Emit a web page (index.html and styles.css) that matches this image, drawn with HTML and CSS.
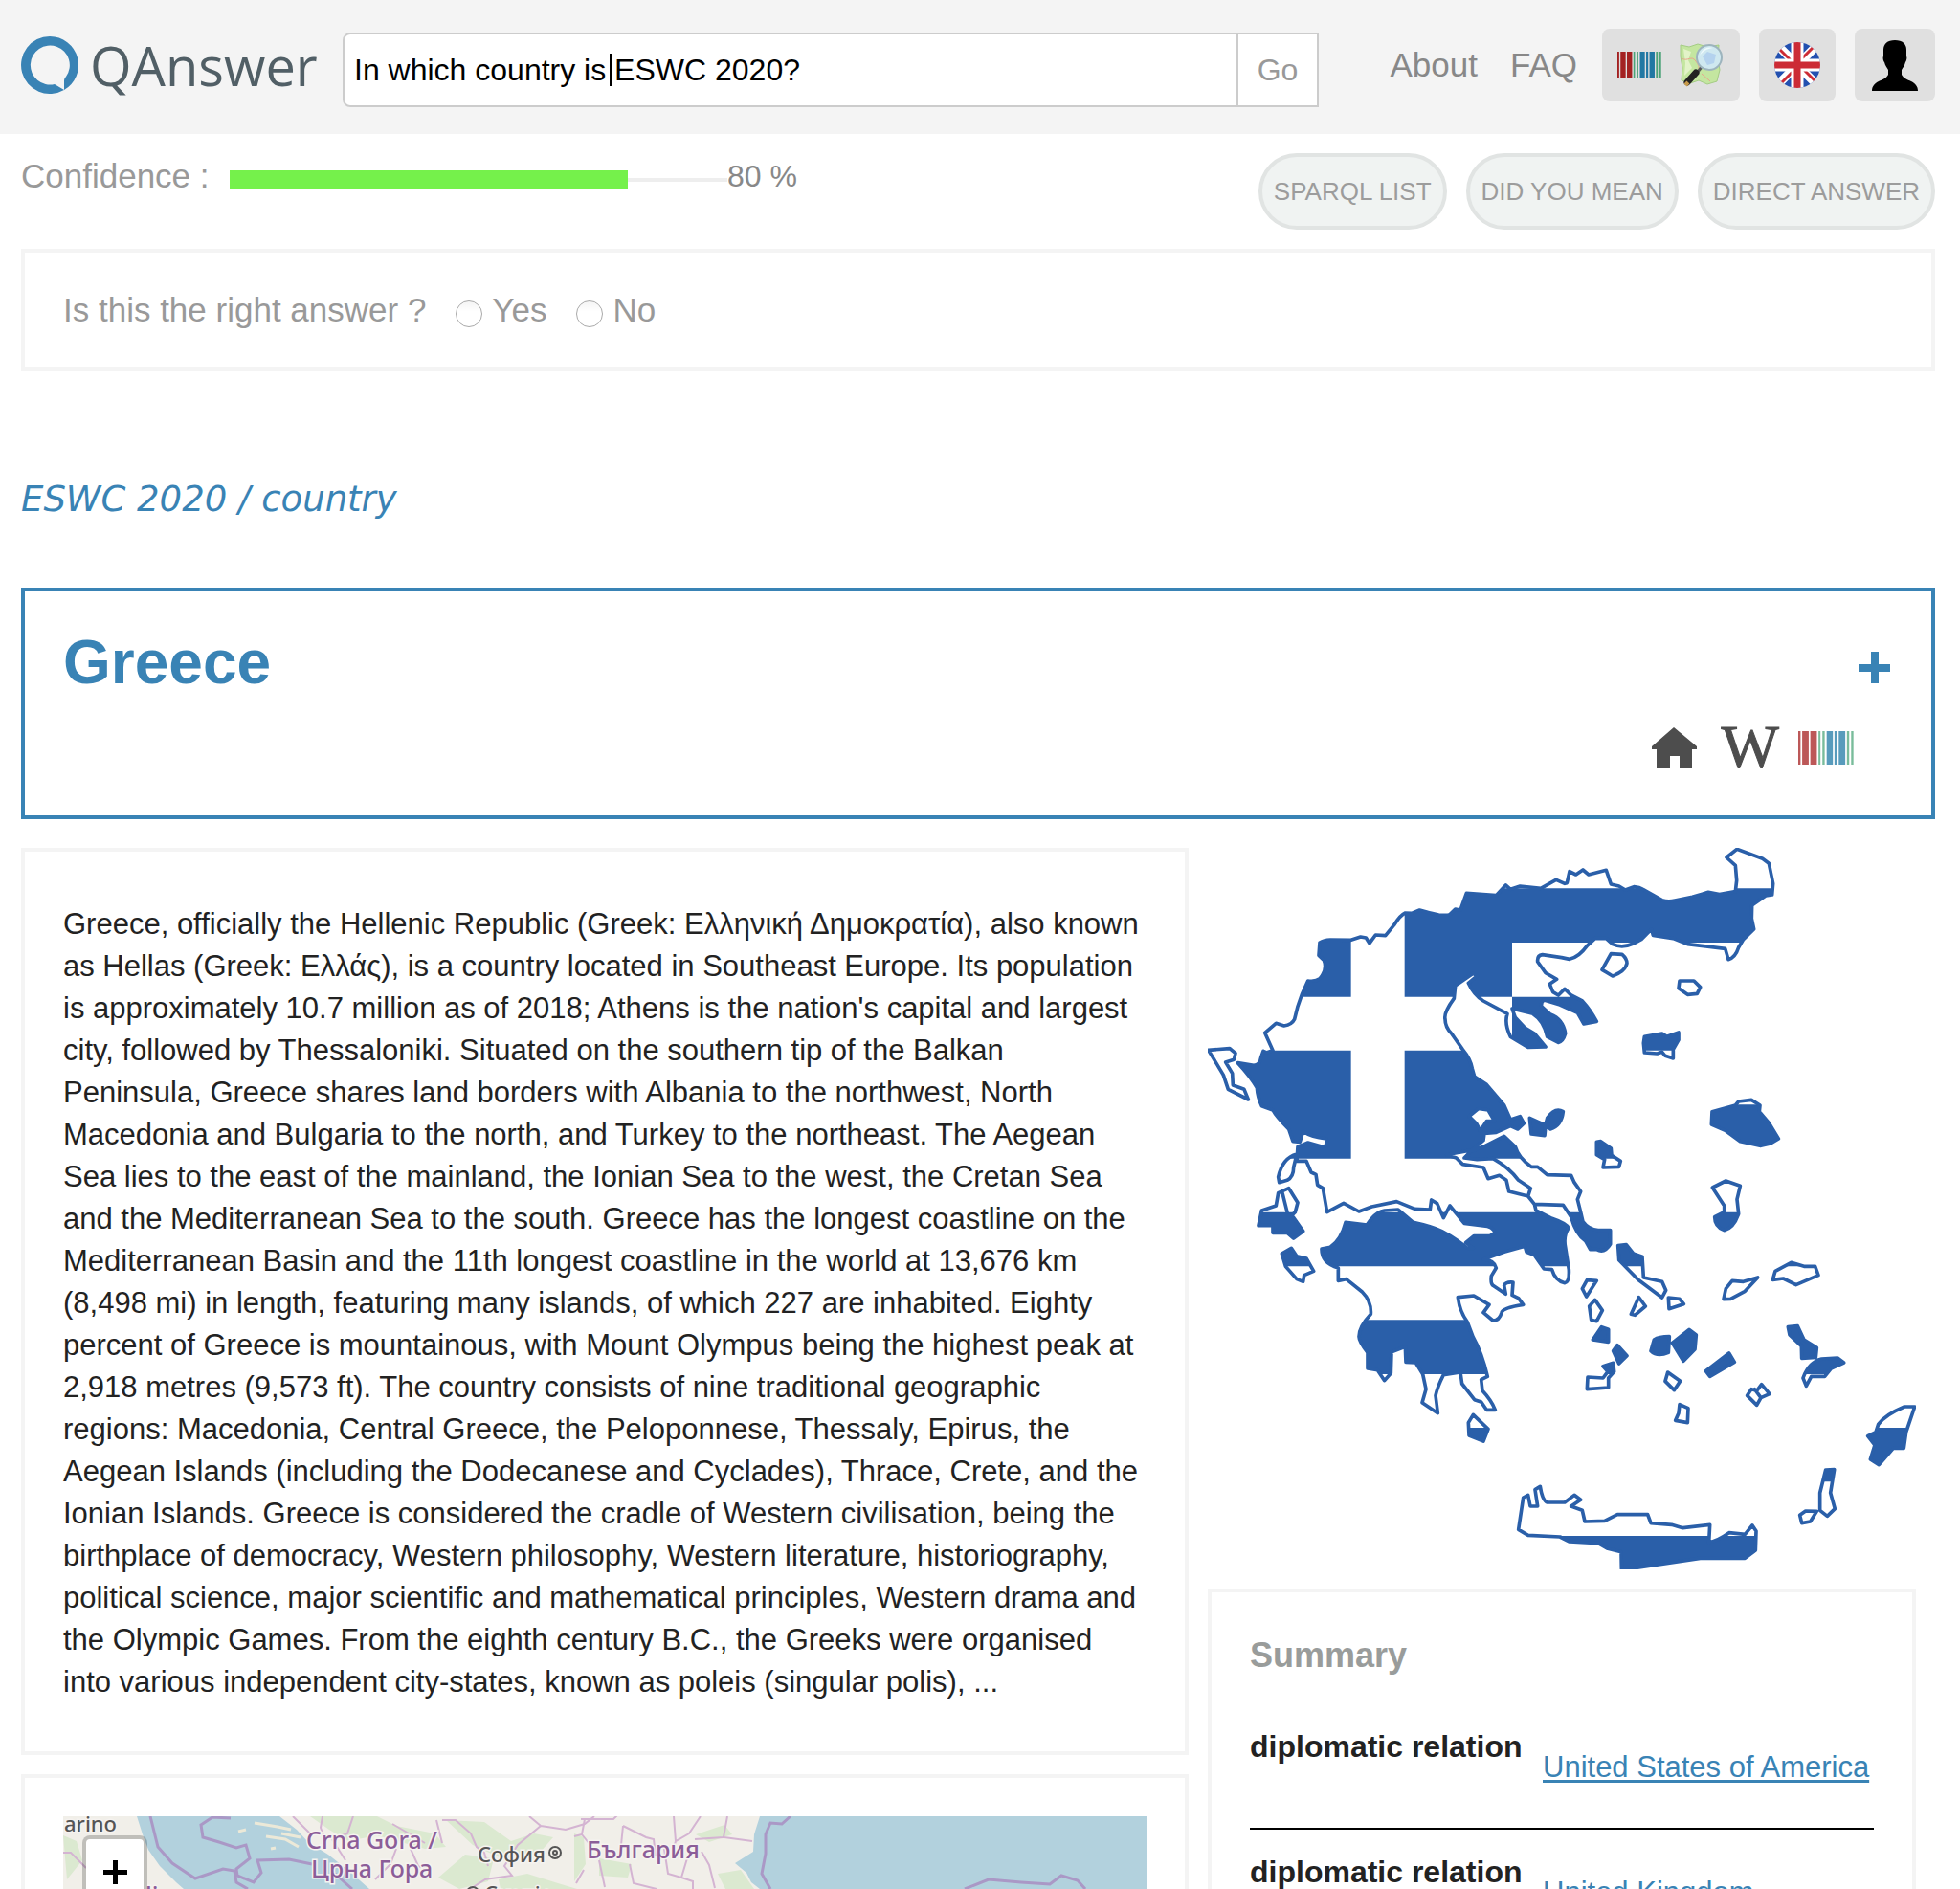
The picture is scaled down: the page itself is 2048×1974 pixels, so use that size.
FILE: index.html
```html
<!DOCTYPE html>
<html lang="en">
<head>
<meta charset="utf-8">
<title>QAnswer</title>
<link rel="stylesheet" href="styles.css">
</head>
<body>
<svg class="defs" aria-hidden="true">
  <symbol id="barcode" viewBox="0 0 170 105" preserveAspectRatio="none">
    <path fill="#900" d="M0 0h7v105H0zM12 0h20v105H12zM37 0h20v105H37z"/>
    <path fill="#396" d="M62 0h6v105h-6zM74 0h7v105h-7zM149 0h7v105h-7zM162 0h7v105h-7z"/>
    <path fill="#069" d="M87 0h19v105H87zM111 0h8v105h-8zM124 0h20v105h-20z"/>
  </symbol>
</svg>

<header class="header">
  <a class="logo" href="#">
    <svg class="logo-mark" viewBox="0 0 60 60" aria-hidden="true">
      <path fill="#3983b5" fill-rule="evenodd" d="M30 0a30 30 0 0 1 15 56V46q0-2 2-4A20.500 20.500 0 1 0 35 50l10 6A30 30 0 1 1 30 0z"/>
    </svg>
    <span>QAnswer</span>
  </a>
  <form class="search">
    <input class="search-input" type="text" aria-label="Question" value="In which country is ESWC 2020?">
    <span class="caret"></span>
    <button class="search-go" type="button">Go</button>
  </form>
  <nav class="nav">
    <a class="nav-link" href="#">About</a>
    <a class="nav-link" href="#">FAQ</a>
    <button class="chip chip-data" type="button" aria-label="Datasets">
      <svg class="chip-barcode" aria-hidden="true"><use href="#barcode"/></svg>
      <svg class="chip-icon" viewBox="0 0 48 48" aria-hidden="true">
        <path fill="#c4e6a0" stroke="#a4cc84" d="M2 3l9 2 9-3 10 3 12-2-1 14 2 12-3 12-10 3-9-4-9 3-9-3 1-13-2-12z"/>
        <path fill="#e2f3c8" d="M5 7l8 3-3 9 4 8-8 8 1-13zM22 6l8 3-6 8-5-4z"/>
        <path fill="none" stroke="#e9a58d" d="M3 17c7 4 10-4 15 3s3 8 1 13M24 33l9 8"/>
        <path stroke="#555" stroke-width="3" d="M24 26l-4 5"/>
        <path stroke="#222" stroke-width="7" stroke-linecap="round" d="M18 32L9 42"/>
        <path stroke="#c79a4a" stroke-width="4" d="M7 42l3 3"/>
        <circle cx="32" cy="16" r="13" fill="#cfe8f0" stroke="#9db4bd" stroke-width="2"/>
        <path fill="#b4d2ee" d="M25 15l5-5 9 3-2 9-7 2z"/>
        <path fill="#eef9fb" d="M22 14a11 11 0 0 1 14-8q-9 1-14 8z"/>
      </svg>
    </button>
    <button class="chip" type="button" aria-label="Language: English">
      <svg class="chip-icon" viewBox="0 0 48 48" aria-hidden="true">
        <clipPath id="round"><circle cx="24" cy="24" r="24"/></clipPath>
        <g clip-path="url(#round)">
          <path fill="#2250b0" d="M0 0h48v48H0z"/>
          <path stroke="#fff" stroke-width="9" d="M0 0l48 48M48 0L0 48"/>
          <path stroke="#cc2b35" stroke-width="3" d="M0 2l20 20M28 26l20 20M46 0L26 20M22 28L2 48"/>
          <path stroke="#fff" stroke-width="13" d="M24 0v48M0 24h48"/>
          <path stroke="#cc2b35" stroke-width="7" d="M24 0v48M0 24h48"/>
        </g>
      </svg>
    </button>
    <button class="chip chip-user" type="button" aria-label="Account">
      <svg class="user-icon" viewBox="0 0 48 53" aria-hidden="true">
        <path d="M24 0c8 0 12 4 12 10v7c1 1 0 5-1 6-1 4-3 6-4 8v5c2 4 6 5 10 7 4 2 7 5 7 10H0c0-5 3-8 7-10 4-2 8-3 10-7v-5c-1-2-3-4-4-8-1-1-2-5-1-6v-7C12 4 16 0 24 0z"/>
      </svg>
    </button>
  </nav>
</header>

<main class="main">
  <div class="toolbar">
    <div class="confidence">
      <span class="confidence-label">Confidence :</span>
      <div class="meter"><div class="meter-fill" style="width:80%"></div></div>
      <span class="confidence-value">80 %</span>
    </div>
    <div class="actions">
      <button class="pill" type="button">SPARQL LIST</button>
      <button class="pill" type="button">DID YOU MEAN</button>
      <button class="pill" type="button">DIRECT ANSWER</button>
    </div>
  </div>

  <form class="card feedback">
    <span>Is this the right answer ?</span>
    <label class="choice"><input class="radio" type="radio" name="right">Yes</label>
    <label class="choice"><input class="radio" type="radio" name="right">No</label>
  </form>

  <h2 class="query">ESWC 2020 / country</h2>

  <section class="card entity">
    <div class="entity-head">
      <h1 class="entity-name">Greece</h1>
      <button class="expand" type="button" aria-label="Expand">
        <svg viewBox="0 0 33 33" aria-hidden="true"><path fill="#3983b5" d="M13 0h8v13h12v8H21v12h-8V21H0v-8h13z"/></svg>
      </button>
    </div>
    <div class="entity-links">
      <a href="#" aria-label="Homepage"><svg class="icon-home" viewBox="0 0 47 43"><path fill="#4d4d4d" d="M23 0l24 20v3h-5v20H29V30H19v13H5V23H0v-3z"/></svg></a>
      <a class="icon-wiki" href="#" aria-label="Wikipedia">W</a>
      <a href="#" aria-label="Wikidata"><svg class="icon-wikidata"><use href="#barcode"/></svg></a>
    </div>
  </section>

  <div class="columns">
    <div class="column">
      <article class="card abstract">
        <p>Greece, officially the Hellenic Republic (Greek: Ελληνική Δημοκρατία), also known<br>
        as Hellas (Greek: Ελλάς), is a country located in Southeast Europe. Its population<br>
        is approximately 10.7 million as of 2018; Athens is the nation's capital and largest<br>
        city, followed by Thessaloniki. Situated on the southern tip of the Balkan<br>
        Peninsula, Greece shares land borders with Albania to the northwest, North<br>
        Macedonia and Bulgaria to the north, and Turkey to the northeast. The Aegean<br>
        Sea lies to the east of the mainland, the Ionian Sea to the west, the Cretan Sea<br>
        and the Mediterranean Sea to the south. Greece has the longest coastline on the<br>
        Mediterranean Basin and the 11th longest coastline in the world at 13,676 km<br>
        (8,498 mi) in length, featuring many islands, of which 227 are inhabited. Eighty<br>
        percent of Greece is mountainous, with Mount Olympus being the highest peak at<br>
        2,918 metres (9,573 ft). The country consists of nine traditional geographic<br>
        regions: Macedonia, Central Greece, the Peloponnese, Thessaly, Epirus, the<br>
        Aegean Islands (including the Dodecanese and Cyclades), Thrace, Crete, and the<br>
        Ionian Islands. Greece is considered the cradle of Western civilisation, being the<br>
        birthplace of democracy, Western philosophy, Western literature, historiography,<br>
        political science, major scientific and mathematical principles, Western drama and<br>
        the Olympic Games. From the eighth century B.C., the Greeks were organised<br>
        into various independent city-states, known as poleis (singular polis), ...</p>
      </article>
      <section class="card map-card">
        <div class="map">
          <svg class="map-tiles" viewBox="0 0 1132 400" preserveAspectRatio="xMinYMin slice" role="img" aria-label="Map of the Balkans">
            <path fill="#f1efe9" d="M0 0h1132v400H0z"/>
            <g fill="#dbe9d0">
              <path d="M258 0h70l20 10 40 8 12 14-22 2-50-14-30 6-20-12zM400 4l40 2 28 20 24-8 20 4-14 16-40 6-30-14zM420 40l30 4-6 24-30 8-22-12zM455 66l30-6 32 10 20 6h-80zM534 18l10 4 2 28-12 18zM560 44l34 6-4 14-30-2zM661 19l30-10 8 10-24 8zM684 60l24-4 14 20h-30zM0 20l14 6 6 20-16 20z"/>
            </g>
            <path fill="#b2d1dd" d="M77 0l6 19 6 16 12 17 17 17 8 7 74 324h300L320 76l-19-17-24-19-21-13-12-13L226 0zM728 0l-6 19-1 18-19 12 12 10 5 10 9 7 40 324h364V0z"/>
            <path fill="none" stroke="#ece9d8" stroke-width="3" d="M200 7l24 4 14 3M212 21l20 3 14 8M183 16l8-2M217 34l5-1M228 18l20 4"/>
            <g fill="none" stroke="#d4b4d2" stroke-width="2">
              <path d="M240 0l18 18M271 0l-2 12 4 10M303 0l-6 18-16 6 14 22M390 4l6 24M396 4h14l16 14 6 14 8 6 4 14M487 0l12 10-24 20-14 22 8 10-28 4-22 14M499 10l26 4 20-6 10-8M344 8l24 14 10 6M348 34l-6 16-16 16M363 34l8 18 10 4"/>
              <path d="M541 3h34l4-4M545 3l-3 16-8 2M542 19l8 10M585 10l24 12 8 2 2 18M585 10l-2 20M638 0l2 26 14-8 12-18M640 26l-2 8M694 0l-4 22 30 4M690 22l-30 2M628 34l4 26 14 4 6-20M667 37l8 14 6 24M560 46l6 28M544 56l-8 14M592 50l4 20 24 6M646 64l12 4v8M0 38h8l16 16"/>
            </g>
            <g fill="none" stroke="#aa98c6" stroke-width="3">
              <path d="M91 0l8 32 15 17 24 16 29-10 12 2 2 12 12 7M175 2l-19-1-12 8 2 13 17 5 18 6 10-3 4 14-14 11 1 7 17 7 8-10-4-13 33-1 24 5M284 60l18 16"/>
              <path d="M760 0l-9 8-12-1-5 12v20l-4 21 9 16M942 76l25-10 34 3 30 2 12-9 17 5 8 9"/>
            </g>
            <g class="map-country">
              <text x="254" y="34">Crna Gora /</text>
              <text x="259" y="64">Црна Гора</text>
              <text x="547" y="44">България</text>
              <text x="86" y="92">lia</text>
            </g>
            <g class="map-city">
              <text x="1" y="16">arino</text>
              <text x="433" y="48">София</text>
              <text x="440" y="89">Скопје</text>
            </g>
            <g fill="none" stroke="#555" stroke-width="2"><circle cx="514" cy="38" r="6"/><circle cx="514" cy="38" r="2"/><circle cx="428" cy="80" r="6"/></g>
          </svg>
          <button class="map-zoom" type="button" aria-label="Zoom in">
            <svg viewBox="0 0 25 25" aria-hidden="true"><path d="M10 0h5v10h10v5H15v10h-5V15H0v-5h10z"/></svg>
          </button>
        </div>
      </section>
    </div>

    <aside class="column">
      <svg class="flag-map" viewBox="36 48 2220 2262" role="img" aria-label="Flag map of Greece">
        <defs>
          <path id="land" clip-rule="evenodd" d="M130 722L180 730Q200 728 203 705L210 685 220 690 240 683 215 628 250 598 275 606Q300 602 308 585L318 545Q330 505 350 465 375 468 387 458 412 430 400 400L384 385 387 345Q400 337 420 336L485 337 515 327 532 330 543 347 562 321 593 323 620 290Q640 258 655 252L675 253 700 243Q730 252 760 258 785 260 795 257L812 240 828 243 847 190 940 197 970 165 985 178 1015 168 1080 175 1128 148 1155 160 1162 158 1170 122 1190 132 1212 117 1230 132 1285 118 1300 162 1325 168 1345 180 1372 170Q1390 172 1400 178L1460 212Q1480 218 1500 213L1555 202 1605 187 1640 194 1690 185 1694 150 1690 103 1662 78 1695 52 1775 82 1795 97 1808 160 1805 195 1785 198 1742 228 1741 270 1748 303 1715 335 1700 360Q1690 392 1668 398L1658 364 1540 350 1495 332 1432 322 1427 303 1395 335 1370 348Q1335 364 1305 350L1285 332 1250 332 1225 355Q1200 390 1170 397L1145 392 1085 383Q1068 385 1070 405L1095 440 1130 460 1108 475 1118 500 1135 510 1155 490 1175 510 1210 528Q1235 555 1255 592L1215 600 1195 565 1140 540 1090 525Q1080 530 1082 545L1110 570Q1150 585 1157 630 1150 655 1135 658L1100 640Q1090 590 1055 568L990 552 1000 580 1030 612 1060 630 1095 672 1040 673 985 640Q965 600 975 568L900 528Q870 510 853 472L880 450 868 442 812 480 808 520Q775 565 780 585 780 610 800 630L835 680Q860 710 865 740L872 765 910 790 965 855 985 900 1015 890 1027 912 1008 930 985 920 940 940 903 943 900 965 865 995 785 1010 815 1020 835 1040 900 1050 915 1085 950 1075 972 1090 980 1125 1040 1140 1060 1165 1065 1185 1115 1210Q1160 1225 1167 1240 1150 1265 1157 1300L1168 1370Q1170 1410 1155 1412 1125 1405 1115 1370L1090 1368 1060 1325 1035 1315 1030 1297 965 1315 900 1338Q935 1340 940 1365L925 1390Q922 1415 930 1420L970 1447 965 1420Q970 1408 993 1410L990 1450 1010 1460 1025 1480Q960 1490 957 1505 950 1530 930 1530L900 1505 918 1480 870 1452 820 1457Q825 1500 850 1535L867 1580Q895 1630 913 1705L893 1715 897 1750Q925 1780 937 1810L910 1810 893 1785 872 1778 833 1728 828 1692 775 1700Q755 1740 750 1765L757 1820 708 1787 720 1745 710 1698 688 1662 657 1660 655 1612 612 1628 610 1695 590 1718 568 1685 537 1680 537 1630Q510 1595 510 1580 510 1550 547 1510 550 1470 520 1440L470 1400 445 1405 445 1365Q392 1350 393 1305L420 1300Q455 1275 468 1222L535 1230Q560 1190 590 1185L632 1182 680 1222Q740 1235 770 1250 810 1270 850 1303L868 1303 845 1285 870 1265 920 1265 937 1255Q930 1235 900 1233L840 1225 795 1170 775 1208 755 1163 737 1152 733 1182 685 1180 628 1157 550 1173 510 1188 462 1162 410 1190 397 1115 380 1105 375 1072 360 1065 345 1030 315 1030 318 985 350 972 395 985 410 980 408 960Q360 955 335 937L325 970 303 968 290 930Q250 890 240 870L205 857Q192 830 190 800 170 765 130 722ZM855 890L878 912 890 935 910 905 935 905 915 870 885 865Z
          M315 1008Q270 1020 257 1080L260 1097 285 1090Q305 1080 305 1050ZM38 682L105 677 123 692 118 712 92 720 113 755 115 792 150 805 163 837 100 805 85 760ZM205 1185L250 1170 257 1130 290 1115 318 1160 310 1190 300 1200 335 1250 305 1272 285 1255 240 1255 240 1232 195 1232ZM270 1130L285 1190ZM268 1320L298 1303 315 1328 345 1335 368 1375 338 1388 335 1408 315 1400 280 1360ZM868 1825L915 1870 900 1908 855 1890 853 1850Z
          M840 1020L860 1000 900 985 965 952 1000 985Q1010 1020 1050 1048L1070 1048 1100 1073 1175 1075 1185 1097 1205 1125 1195 1150 1205 1190 1212 1220Q1230 1245 1260 1247L1298 1247 1298 1290Q1280 1320 1255 1307L1235 1307 1220 1280Q1190 1260 1175 1205L1150 1168 1060 1165 1040 1140 1048 1115 1010 1090Q980 1050 930 1022L880 1025Z
          M1045 895L1095 918 1092 950 1050 945ZM1100 895Q1125 860 1150 875 1145 920 1110 930L1095 915ZM1300 380L1335 382Q1350 395 1350 410 1345 435 1305 450L1272 430ZM1515 465L1560 465 1580 485 1570 505 1540 508 1512 488ZM1405 640L1460 630 1475 640 1512 627 1512 650 1495 680 1495 708 1470 700 1460 688 1445 693 1405 690 1402 660ZM1617 875L1690 855 1700 843 1740 838 1767 855 1765 875 1795 910 1825 960 1800 975 1770 982 1705 968 1660 935 1615 915ZM1255 970L1268 968 1300 990 1302 1012 1330 1030 1325 1048 1275 1050 1280 1025 1255 1010ZM1618 1113L1660 1092 1705 1108 1695 1150 1700 1195Q1685 1240 1655 1247 1625 1235 1625 1205L1655 1190 1655 1170Z
          M1322 1295L1348 1292 1370 1320 1398 1330 1402 1395 1460 1408 1472 1435 1460 1458 1385 1402 1325 1340ZM1480 1458L1515 1462 1528 1478 1482 1493ZM1387 1457L1408 1485 1375 1513 1363 1510ZM1225 1403L1255 1405 1223 1455 1210 1430ZM1250 1465L1273 1498 1255 1532 1238 1528 1232 1485ZM1270 1550L1292 1558 1292 1597 1243 1590ZM1320 1607L1350 1640 1325 1665 1307 1625ZM1275 1673L1307 1663 1310 1690 1292 1710 1292 1740 1225 1745 1227 1707 1275 1710 1290 1690ZM1435 1590Q1450 1580 1483 1580L1480 1630Q1445 1645 1425 1625ZM1492 1600L1545 1558 1567 1575 1563 1620 1527 1657ZM1597 1688L1670 1632 1687 1660 1610 1705ZM1478 1692L1517 1720 1498 1748 1470 1720ZM1515 1793L1542 1805 1540 1850 1502 1843 1512 1820ZM1740 1745L1757 1750 1772 1730 1797 1760 1770 1772 1757 1795 1727 1765ZM1750 1745L1770 1772Z
          M1807 1402L1815 1375 1865 1348 1905 1360 1940 1360 1950 1388 1880 1418 1840 1398ZM1653 1463L1660 1430 1680 1405 1715 1408 1760 1395 1720 1438 1675 1462ZM1855 1550L1885 1547 1905 1590 1945 1615 1942 1645 1898 1648 1897 1610 1860 1575ZM2030 1662L2010 1647 1960 1650Q1920 1660 1902 1710L1912 1735 1928 1705 1970 1705 1990 1680ZM2252 1800L2220 1800Q2160 1825 2138 1855L2130 1880 2105 1892 2127 1920 2113 1965 2140 1982 2185 1930 2218 1930 2225 1880ZM1973 1998L2000 1997 1988 2070 2002 2120 1978 2143 1955 2125 1955 2070ZM1892 2140L1910 2127 1945 2128 1925 2160 1898 2165Z
          M1010 2185L1025 2085 1040 2077 1047 2112 1070 2112 1062 2060 1078 2050Q1085 2095 1100 2100L1155 2100 1185 2077 1205 2092 1175 2112 1210 2125 1218 2160 1280 2158 1320 2138 1415 2138 1425 2165 1490 2170 1525 2180 1610 2170 1607 2225Q1635 2220 1670 2195L1720 2200 1743 2172 1755 2190 1753 2250 1720 2275 1580 2275 1360 2308 1333 2308 1332 2255 1290 2245 1260 2228 1170 2223 1140 2208 1040 2203Z"/>
          <clipPath id="land-clip"><use href="#land" clip-rule="evenodd"/></clipPath>
        </defs>
        <g fill="#2a5fa9" clip-path="url(#land-clip)">
          <path d="M0 0h485v515H0zM653 175h337v340H653zM990 175h1300v170H990zM990 515h1300v168H990zM126 683h359v339H0V870h190zM653 683h337v339H653zM990 853h1300v169H990zM0 1190h2300v170H0zM0 1528h2300v170H0zM0 1866h2300v169H0zM0 2205h2300v170H0z"/>
        </g>
        <use href="#land" fill="none" stroke="#2a5fa9" stroke-width="11" stroke-linejoin="round"/>
      </svg>
      <section class="card summary">
        <h3 class="summary-title">Summary</h3>
        <table class="facts">
          <tr><th scope="row">diplomatic relation</th><td><a href="#">United States of America</a></td></tr>
          <tr><th scope="row">diplomatic relation</th><td><a href="#">United Kingdom</a></td></tr>
        </table>
      </section>
    </aside>
  </div>
</main>
</body>
</html>
```
FILE: styles.css
```css
* { box-sizing: border-box; }

body {
  margin: 0;
  height: 100vh;
  overflow: hidden;
  background: #fff;
  color: #222;
  font-family: "Liberation Sans", Arial, sans-serif;
  font-size: 31px;
  line-height: 44px;
}

button, input { font: inherit; }
button { cursor: pointer; }
svg { display: block; }
h1, h2, h3, p { margin: 0; }
.defs { width: 0; height: 0; position: absolute; }

.header {
  display: flex;
  align-items: flex-start;
  padding: 30px 26px 28px 22px;
  background: #f4f4f4;
}

.logo {
  display: flex;
  align-items: center;
  gap: 12px;
  width: 336px;
  height: 76px;
  color: #515f66;
  font-family: "Open Sans", "Noto Sans", sans-serif;
  font-size: 56px;
  font-weight: 500;
  text-decoration: none;
}
.logo-mark { width: 60px; height: 60px; }

.search {
  position: relative;
  display: flex;
  flex: 0 1 51%;
  height: 78px;
  margin-top: 4px;
  font-size: 32px;
}
.search-input {
  flex: 1;
  min-width: 0;
  padding: 0 10px;
  border: 2px solid #ccc;
  border-radius: 8px 0 0 8px;
  background: #fff;
  color: #000;
}
.search-go {
  width: 86px;
  margin-left: -2px;
  padding: 0;
  border: 2px solid #ccc;
  background: #fff;
  color: #999;
}
.caret {
  position: absolute;
  left: 279px;
  top: 22px;
  width: 2px;
  height: 34px;
  background: #000;
}

.nav {
  display: flex;
  align-items: center;
  gap: 20px;
  height: 76px;
  margin-left: auto;
}
.nav-link {
  margin-right: 14px;
  color: #888;
  font-size: 35px;
  text-decoration: none;
}
.nav-link + .nav-link { margin-right: 6px; }
.chip {
  display: flex;
  align-items: center;
  justify-content: center;
  gap: 18px;
  width: 80px;
  height: 76px;
  padding: 0;
  border: 0;
  border-radius: 8px;
  background: #e0e0e0;
}
.chip-data { width: 144px; }
.chip-user { width: 84px; }
.chip-barcode { width: 46px; height: 28px; opacity: 0.85; }
.chip-icon { width: 48px; height: 48px; }
.user-icon { width: 48px; height: 53px; }

.main { padding: 20px 26px 0 22px; }

.toolbar {
  display: flex;
  justify-content: space-between;
  color: #999;
}
.confidence {
  display: flex;
  align-items: center;
  flex: 1;
  height: 48px;
}
.confidence-label { width: 218px; font-size: 35px; }
.confidence-value { color: #888; font-size: 32px; }
.meter {
  width: 520px;
  height: 20px;
  margin-top: 8px;
  background: linear-gradient(#eee, #eee) center / 100% 4px no-repeat;
}
.meter-fill { height: 20px; background: #75f14b; }

.actions { display: flex; gap: 20px; }
.pill {
  height: 80px;
  padding: 0 12px;
  border: 4px solid #e1e4e3;
  border-radius: 40px;
  background: #f0f3f2;
  color: #9c9c9c;
  font-size: 26px;
}

.card { border: 4px solid #f4f4f4; padding: 40px; }

.feedback {
  display: flex;
  align-items: center;
  height: 128px;
  margin-top: 20px;
  padding: 0 40px;
  color: #999;
  font-size: 35px;
}
.choice { display: flex; align-items: center; gap: 10px; margin-left: 31px; }
.radio {
  appearance: none;
  width: 28px;
  height: 28px;
  margin: 8px 0 0;
  border: 1px solid #aaa;
  border-radius: 50%;
  background: linear-gradient(#f4f4f4, #fff 40%);
}

.query {
  margin: 110px 0 68px;
  color: #3983b5;
  font: italic 400 37px/48px "DejaVu Sans", Verdana, sans-serif;
}

.entity {
  height: 242px;
  border-color: #3983b5;
  padding: 38px 40px;
}
.entity-head { display: flex; align-items: center; justify-content: space-between; }
.entity-name { color: #3983b5; font-size: 64px; line-height: 72px; }
.expand {
  width: 36px;
  height: 33px;
  margin-top: 10px;
  padding: 0 3px 0 0;
  border: 0;
  background: none;
}
.entity-links {
  display: flex;
  align-items: center;
  justify-content: flex-end;
  gap: 20px;
  height: 44px;
  margin-top: 31px;
  padding-right: 41px;
}
.icon-home { width: 47px; height: 43px; margin-right: 6px; }
.icon-wiki {
  color: #4d4d4d;
  font: 64px/44px "Liberation Serif", serif;
  text-decoration: none;
  -webkit-text-stroke: 1px #4d4d4d;
}
.icon-wikidata { width: 58px; height: 35px; opacity: 0.65; }

.columns {
  display: grid;
  grid-template-columns: 1220fr 740fr;
  gap: 20px;
  align-items: start;
  margin-top: 30px;
  padding-right: 20px;
}
.column { display: grid; gap: 20px; min-width: 0; }

.abstract { padding: 54px 40px 50px; white-space: nowrap; }

.map { position: relative; height: 400px; overflow: hidden; }
.map-tiles { width: 100%; height: 400px; }
.map-country, .map-city {
  font-family: "Noto Sans", sans-serif;
  stroke: #f6f3f0;
  stroke-width: 3px;
  paint-order: stroke;
}
.map-country { fill: #8b5d98; font-size: 25px; font-weight: 500; }
.map-city { fill: #555; font-size: 22px; font-weight: 500; }
.map-zoom {
  position: absolute;
  left: 20px;
  top: 20px;
  display: grid;
  place-items: center;
  width: 68px;
  height: 76px;
  padding: 0;
  border: 4px solid rgba(0, 0, 0, 0.2);
  border-radius: 8px;
  background: #fff;
  background-clip: padding-box;
}
.map-zoom svg { width: 25px; height: 25px; }

.flag-map { width: 100%; height: auto; }

.summary { padding: 44px 40px; }
.summary-title { color: #999c9b; font-size: 36px; line-height: 44px; }
.facts {
  width: 100%;
  margin-top: 29px;
  border-collapse: collapse;
}
.facts tr { border-bottom: 2px solid #000; }
.facts th, .facts td { vertical-align: top; text-align: left; white-space: nowrap; }
.facts th { width: 306px; padding: 22px 0 0; font-size: 32px; }
.facts td { padding: 44px 0 41px; }
.facts a { color: #3983b5; text-underline-offset: 3px; }
```
